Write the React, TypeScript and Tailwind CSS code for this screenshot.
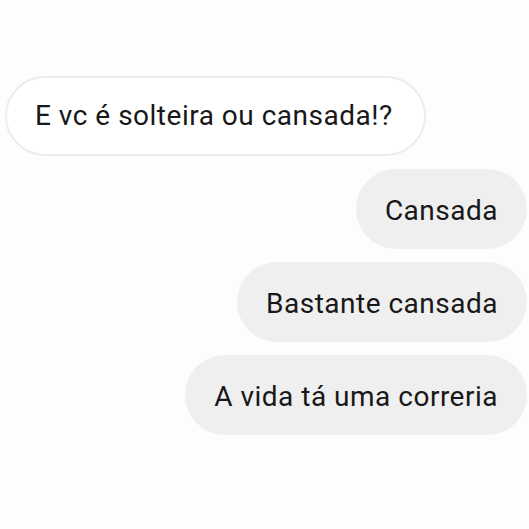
const received = 'E vc é solteira ou cansada!?'

const sent = ['Cansada', 'Bastante cansada', 'A vida tá uma correria']

export default function App() {
  return (
    <div
      className="w-[529px] h-[529px] bg-[#fdfdfd] flex flex-col pt-[76px] gap-[13px] overflow-hidden"
      style={{ fontFamily: 'Roboto, "Liberation Sans", sans-serif' }}
    >
      <div className="self-start ml-[5px] h-[80px] pl-[28px] pr-[31px] flex items-center rounded-full border-2 border-[#ececec] bg-white">
        <span className="text-[28px] tracking-[0.5px] text-[#181818]">{received}</span>
      </div>
      {sent.map((msg) => (
        <div
          key={msg}
          className="self-end mr-[2px] h-[80px] px-[29px] pt-[3px] flex items-center rounded-full bg-[#efefef]"
        >
          <span className="text-[28px] tracking-[0.5px] text-[#181818]">{msg}</span>
        </div>
      ))}
    </div>
  )
}
